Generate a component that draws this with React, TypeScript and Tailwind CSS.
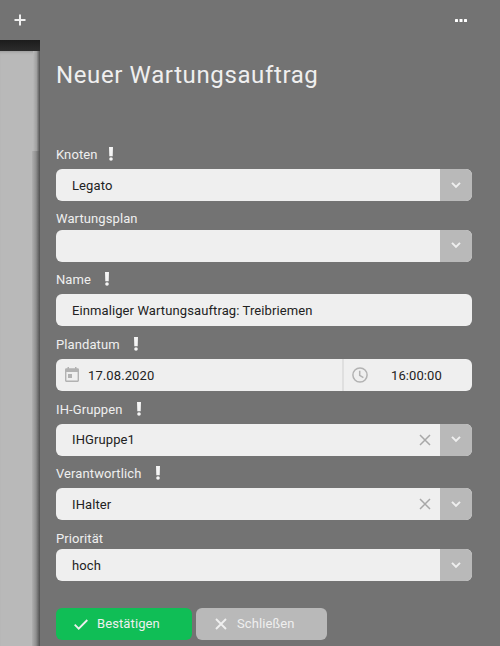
import type { ReactNode } from "react";

function Chevron() {
  return (
    <svg width="10" height="8" viewBox="0 0 10 8" fill="none" stroke="#efefef" strokeWidth="2">
      <path d="M1 1.9 L5 5.9 L9 1.9" />
    </svg>
  );
}

function Cross({ color, width }: { color: string; width: number }) {
  return (
    <svg width="12" height="12" viewBox="0 0 12 12" fill="none" stroke={color} strokeWidth={width}>
      <path d="M1 1 L11 11 M11 1 L1 11" />
    </svg>
  );
}

function Required() {
  return (
    <svg width="4" height="14" viewBox="0 0 4 14" fill="#f5f5f5">
      <path d="M0 0H4L3.7 9.3H0.3Z" />
      <circle cx="2" cy="12" r="1.8" />
    </svg>
  );
}

function Field({ label, labelWidth = "", required, className, children }: { label: string; labelWidth?: string; required?: boolean; className: string; children: ReactNode }) {
  return (
    <div className={`flex flex-col ${className}`}>
      <div className="flex h-5 items-center text-[#efefef]">
        <span className={`pt-0.5 ${labelWidth}`}>{label}</span>
        {required && <Required />}
      </div>
      {children}
    </div>
  );
}

function Select({ value, clearable, raised }: { value?: string; clearable?: boolean; raised?: boolean }) {
  return (
    <div className="flex h-8 overflow-hidden rounded-md bg-[#efefef] text-[#222]">
      <div className="flex grow items-center justify-between pr-[9px] pl-4">
        <span className={raised ? "" : "pt-0.5"}>{value}</span>
        {clearable && <Cross color="#a8a8a8" width={1.5} />}
      </div>
      <div className={`flex w-8 items-center justify-center bg-[#b9b9b9] ${raised ? "pb-0.5" : ""}`}>
        <Chevron />
      </div>
    </div>
  );
}

export default function App() {
  return (
    <div className="flex h-[646px] w-[500px] overflow-hidden bg-[#737373] font-['Roboto',sans-serif] text-[13px] leading-5 tracking-[0.1px]">
      <aside className="flex w-10 shrink-0 flex-col">
        <div className="flex h-10 items-center justify-center">
          <svg width="12" height="12" viewBox="0 0 12 12" fill="none" stroke="#efefef" strokeWidth="2">
            <path d="M6 0.5V11.5M0.5 6H11.5" />
          </svg>
        </div>
        <div className="h-[11px] bg-linear-to-b from-[#1c1c1c] to-[#2c2c2c]" />
        <div className="flex grow flex-col items-end bg-[#b9b9b9] shadow-[inset_0_3px_3px_-2px_#999]">
          <div className="h-[100px] w-[7px] bg-linear-to-r from-[#b9b9b9] via-[#a0a0a0] to-[#505050]" />
          <div className="w-2 grow bg-linear-to-r from-[#b0b0b0] via-[#8f8f8f] to-[#505050]" />
        </div>
      </aside>
      <main className="flex grow flex-col pr-7 pl-4">
        <div className="flex h-10 items-center justify-end pr-[5px]">
          <svg width="12" height="3" viewBox="0 0 12 3" fill="#ffffff">
            <rect width="3" height="3" rx="0.6" />
            <rect x="4.5" width="3" height="3" rx="0.6" />
            <rect x="9" width="3" height="3" rx="0.6" />
          </svg>
        </div>
        <h1 className="mt-[19px] h-[85px] text-2xl leading-8 tracking-[0.62px] text-[#efefef]">Neuer Wartungsauftrag</h1>
        <Field label="Knoten" labelWidth="w-[53px]" required className="gap-[5px]">
          <Select value="Legato" />
        </Field>
        <Field label="Wartungsplan" className="mt-[7px] gap-0.5">
          <Select raised />
        </Field>
        <Field label="Name" labelWidth="w-[49px]" required className="mt-[7px] gap-[5px]">
          <div className="flex h-8 items-center rounded-md bg-[#efefef] px-4 pt-0.5 text-[#222]">Einmaliger Wartungsauftrag: Treibriemen</div>
        </Field>
        <Field label="Plandatum" labelWidth="w-[78px]" required className="mt-2 gap-[5px]">
          <div className="flex h-8 overflow-hidden rounded-md bg-[#efefef] text-[#222]">
            <div className="flex w-[288px] items-center gap-[9px] border-r-2 border-[#dfdfdf] pl-[9px]">
              <svg className="-mt-0.5" width="14" height="15" viewBox="0 0 14 15">
                <path fill="#b2b2b2" fillRule="evenodd" d="M2.5 0H4V1.3H10V0H11.5V1.3H12.7Q14 1.3 14 2.7V13.6Q14 15 12.7 15H1.3Q0 15 0 13.6V2.7Q0 1.3 1.3 1.3H2.5ZM1.4 5V13.6H12.6V5ZM3 7H7V11H3Z" />
              </svg>
              <span className="pt-0.5">17.08.2020</span>
            </div>
            <div className="flex items-center pl-2">
              <svg className="-mt-px" width="16" height="16" viewBox="0 0 16 16" fill="none" stroke="#b2b2b2" strokeWidth="1.5">
                <circle cx="8" cy="8" r="7.1" />
                <path d="M7.7 3.8V8.4L11.4 10.6" />
              </svg>
              <span className="ml-[23px] pt-0.5">16:00:00</span>
            </div>
          </div>
        </Field>
        <Field label="IH-Gruppen" labelWidth="w-[81px]" required className="mt-2 gap-[5px]">
          <Select value="IHGruppe1" clearable raised />
        </Field>
        <Field label="Verantwortlich" labelWidth="w-[100px]" required className="mt-[7px] gap-[5px]">
          <Select value="IHalter" clearable />
        </Field>
        <Field label="Priorität" className="mt-2 gap-px">
          <Select value="hoch" />
        </Field>
        <div className="mt-[27px] flex gap-1 text-[#efefef]">
          <button className="flex h-8 w-[136px] items-center gap-[9px] rounded-md bg-[#10be56] pl-[18px]">
            <svg width="14" height="11" viewBox="0 0 14 11" fill="none" stroke="#efefef" strokeWidth="1.8">
              <path d="M0.7 5.7L4.7 9.7L13.3 1" />
            </svg>
            <span>Bestätigen</span>
          </button>
          <button className="flex h-8 w-[131px] items-center gap-[10px] rounded-md bg-[#b9b9b9] pl-[19px]">
            <Cross color="#efefef" width={1.9} />
            <span>Schließen</span>
          </button>
        </div>
      </main>
    </div>
  );
}
